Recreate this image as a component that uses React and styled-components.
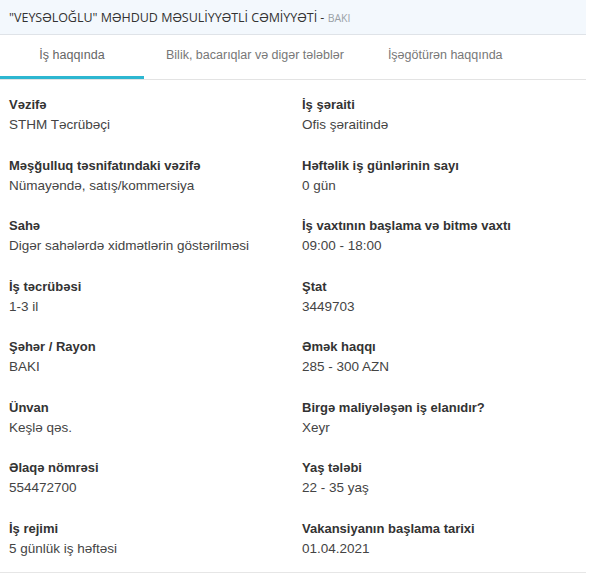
import React, { useState } from 'react';
import styled, { createGlobalStyle } from 'styled-components';

const GlobalStyle = createGlobalStyle`
  body {
    margin: 0;
    background: #fff;
    font-family: "Liberation Sans", Arial, sans-serif;
  }
`;

const tabs = ['İş haqqında', 'Bilik, bacarıqlar və digər tələblər', 'İşəgötürən haqqında'];

const fields = [
  ['Vəzifə', 'STHM Təcrübəçi', 'İş şəraiti', 'Ofis şəraitində'],
  ['Məşğulluq təsnifatındaki vəzifə', 'Nümayəndə, satış/kommersiya', 'Həftəlik iş günlərinin sayı', '0 gün'],
  ['Sahə', 'Digər sahələrdə xidmətlərin göstərilməsi', 'İş vaxtının başlama və bitmə vaxtı', '09:00 - 18:00'],
  ['İş təcrübəsi', '1-3 il', 'Ştat', '3449703'],
  ['Şəhər / Rayon', 'BAKI', 'Əmək haqqı', '285 - 300 AZN'],
  ['Ünvan', 'Keşlə qəs.', 'Birgə maliyələşən iş elanıdır?', 'Xeyr'],
  ['Əlaqə nömrəsi', '554472700', 'Yaş tələbi', '22 - 35 yaş'],
  ['İş rejimi', '5 günlük iş həftəsi', 'Vakansiyanın başlama tarixi', '01.04.2021'],
];

const Panel = styled.div`
  width: 586px;
  border-bottom: 1px solid #e6e6e6;
`;

const Header = styled.div`
  height: 35px;
  box-sizing: border-box;
  padding: 9px 9px 0;
  background: #f3f8fd;
  border-bottom: 1px solid #dfe3e8;
  font-family: "Open Sans", sans-serif;
  font-size: 12.5px;
  color: #333;
  white-space: nowrap;
`;

const City = styled.span`
  font-size: 10.5px;
  color: #9aa0a6;
`;

const TabBar = styled.div`
  display: flex;
  height: 44px;
  border-bottom: 1px solid #e3e3e3;
`;

const Tab = styled.div`
  box-sizing: border-box;
  min-width: ${p => (p.$wide ? '144px' : '0')};
  padding: 13px 22px 0;
  text-align: center;
  font-size: 12.5px;
  color: ${p => (p.$active ? '#666' : '#777')};
  border-bottom: 3px solid ${p => (p.$active ? '#2db7d1' : 'transparent')};
  cursor: pointer;
  white-space: nowrap;
`;

const Grid = styled.div`
  display: grid;
  grid-template-columns: 293px 293px;
  row-gap: 21.5px;
  padding: 15px 0 14px;
`;

const Cell = styled.div`
  padding: 0 9px;
`;

const Label = styled.div`
  font-weight: bold;
  font-size: 13px;
  color: #333;
  line-height: 19px;
`;

const Value = styled.div`
  font-size: 13.5px;
  color: #444;
  line-height: 19px;
  margin-top: 1px;
`;

export default function App() {
  const [active, setActive] = useState(0);
  return (
    <>
      <GlobalStyle />
      <Panel>
        <Header>
          "VEYSƏLOĞLU" MƏHDUD MƏSULİYYƏTLİ CƏMİYYƏTİ - <City>BAKI</City>
        </Header>
        <TabBar>
          {tabs.map((t, i) => (
            <Tab key={t} $wide={i === 0} $active={i === active} onClick={() => setActive(i)}>
              {t}
            </Tab>
          ))}
        </TabBar>
        <Grid>
          {fields.map(([l1, v1, l2, v2]) => (
            <React.Fragment key={l1}>
              <Cell>
                <Label>{l1}</Label>
                <Value>{v1}</Value>
              </Cell>
              <Cell>
                <Label>{l2}</Label>
                <Value>{v2}</Value>
              </Cell>
            </React.Fragment>
          ))}
        </Grid>
      </Panel>
    </>
  );
}
